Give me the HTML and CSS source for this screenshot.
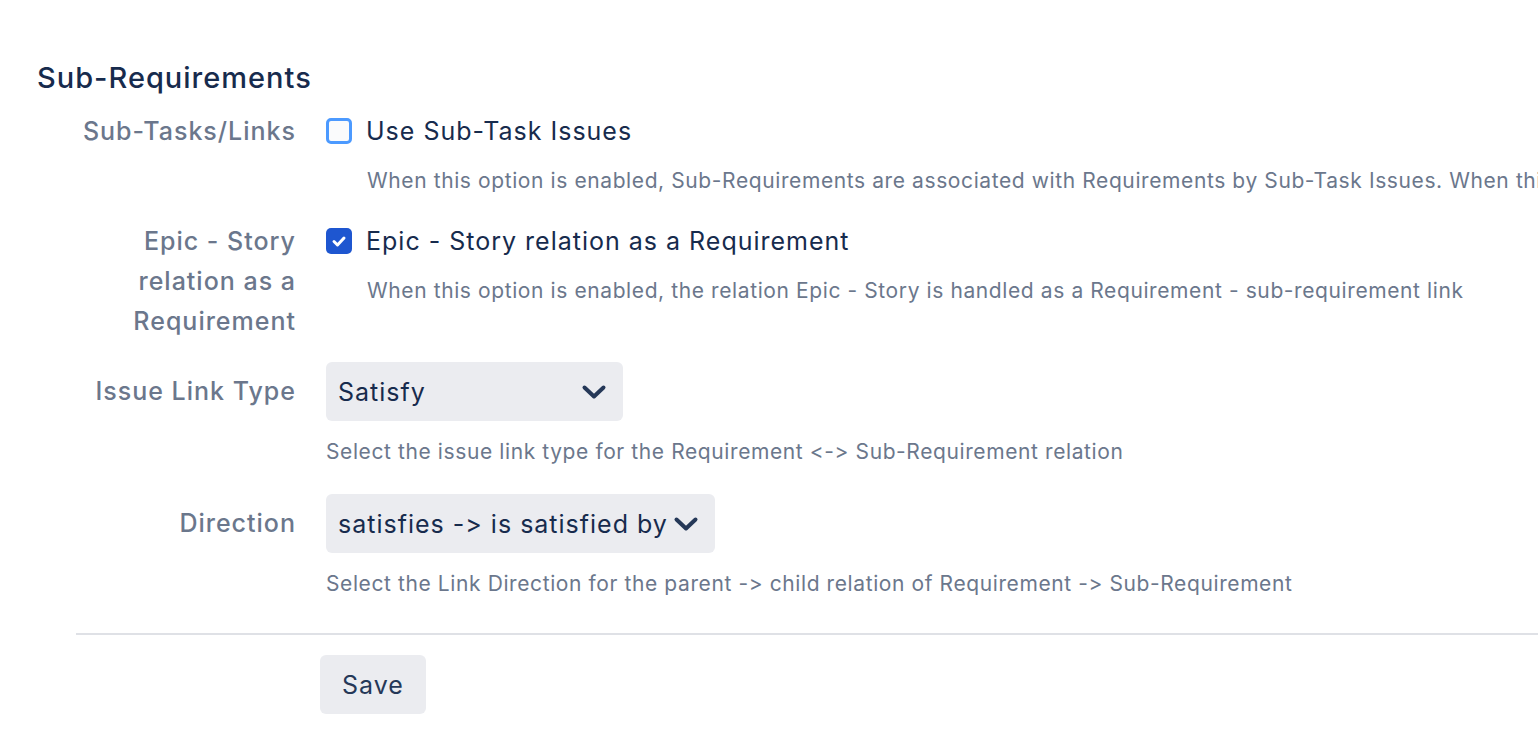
FILE: index.html
```html
<!DOCTYPE html>
<html>
<head>
  <meta charset="UTF-8">
  <title>Sub-Requirements</title>
  <link rel="stylesheet" href="styles.css">
</head>
<body>
  <div class="settings">
    <h2>Sub-Requirements</h2>
    <div class="form-row">
      <div class="field-label">Sub-Tasks/Links</div>
      <div class="field">
        <label class="check">
          <span class="box"></span>
          <span>Use Sub-Task Issues</span>
        </label>
        <div class="check-help">When this option is enabled, Sub-Requirements are associated with Requirements by Sub-Task Issues. When this option is disabled, Sub-Requirements are associated by Issue Links.</div>
      </div>
    </div>
    <div class="form-row epic-row">
      <div class="field-label">Epic - Story relation as a Requirement</div>
      <div class="field">
        <label class="check">
          <span class="box checked">
            <svg width="26" height="26" viewBox="0 0 26 26"><path d="M8 13.5l3.5 3.5 6.5-7" fill="none" stroke="#fff" stroke-width="3" stroke-linecap="round" stroke-linejoin="round"/></svg>
          </span>
          <span>Epic - Story relation as a Requirement</span>
        </label>
        <div class="check-help">When this option is enabled, the relation Epic - Story is handled as a Requirement - sub-requirement link</div>
      </div>
    </div>
    <div class="form-row select-row">
      <div class="field-label">Issue Link Type</div>
      <div class="field">
        <div class="select link-type">
          <span>Satisfy</span>
          <svg class="chevron" width="26" height="16" viewBox="0 0 26 16"><path d="M3.5 3.5l9.5 9 9.5-9" fill="none" stroke="#253858" stroke-width="4" stroke-linecap="round" stroke-linejoin="round"/></svg>
        </div>
        <div class="help">Select the issue link type for the Requirement &lt;-&gt; Sub-Requirement relation</div>
      </div>
    </div>
    <div class="form-row select-row direction-row">
      <div class="field-label">Direction</div>
      <div class="field">
        <div class="select direction">
          <span>satisfies -&gt; is satisfied by</span>
          <svg class="chevron" width="26" height="16" viewBox="0 0 26 16"><path d="M3.5 3.5l9.5 9 9.5-9" fill="none" stroke="#253858" stroke-width="4" stroke-linecap="round" stroke-linejoin="round"/></svg>
        </div>
        <div class="help">Select the Link Direction for the parent -&gt; child relation of Requirement -&gt; Sub-Requirement</div>
      </div>
    </div>
    <div class="buttons">
      <button class="save-button">Save</button>
    </div>
  </div>
</body>
</html>
```

FILE: styles.css
```css
html, body {
  margin: 0;
  padding: 0;
  overflow: hidden;
}
body {
  font-family: Inter, "Noto Sans", sans-serif;
  font-feature-settings: "calt" 0;
  color: #172B4D;
  background: #fff;
}
.settings {
  padding: 58px 0 0 37px;
}
h2 {
  margin: 0;
  font-size: 29px;
  line-height: 40px;
  font-weight: 500;
  color: #172B4D;
  letter-spacing: 1px;
}
.form-row {
  display: flex;
  margin-left: 39px;
  margin-top: 13px;
}
.field-label {
  width: 220px;
  flex-shrink: 0;
  text-align: right;
  font-size: 25px;
  font-weight: 500;
  letter-spacing: 1px;
  line-height: 40px;
  color: #6B778C;
  margin-right: 30px;
}
.field {
  flex: 1;
  min-width: 0;
}
.check {
  display: flex;
  align-items: center;
  font-size: 25px;
  letter-spacing: 1px;
  line-height: 40px;
  color: #172B4D;
}
.box {
  width: 26px;
  height: 26px;
  box-sizing: border-box;
  border: 3px solid #4C9AFF;
  border-radius: 5px;
  background: #FAFBFC;
  margin-right: 14px;
  display: flex;
}
.box.checked {
  border: none;
  background: #1E56D0;
}
.check-help, .help {
  font-size: 21px;
  letter-spacing: 0.6px;
  line-height: 28px;
  color: #6B778C;
  white-space: nowrap;
}
.check-help {
  margin: 16px 0 0 41px;
}
.epic-row {
  margin-top: 26px;
}
.select-row {
  margin-top: 21px;
}
.direction-row {
  margin-top: 28px;
}
.select-row .field-label {
  line-height: 59px;
}
.select {
  display: inline-flex;
  align-items: center;
  justify-content: space-between;
  height: 59px;
  box-sizing: border-box;
  padding: 0 4px 0 12px;
  background: #EBECF0;
  border-radius: 6px;
  font-size: 25px;
  letter-spacing: 1px;
  color: #172B4D;
  white-space: nowrap;
}
.link-type {
  width: 297px;
  padding-right: 16px;
}
.direction {
  width: 389px;
  padding-right: 16px;
}
.chevron {
  flex-shrink: 0;
}
.help {
  margin-top: 17px;
}
.buttons {
  margin: 35px 0 0 39px;
  border-top: 2px solid #DFE1E6;
  padding: 20px 0 0 244px;
}
.save-button {
  height: 59px;
  width: 106px;
  border: none;
  border-radius: 6px;
  background: #EBECF0;
  color: #253858;
  font-family: Inter, "Noto Sans", sans-serif;
  font-feature-settings: "calt" 0;
  font-size: 25px;
  letter-spacing: 1px;
  cursor: pointer;
}
```
